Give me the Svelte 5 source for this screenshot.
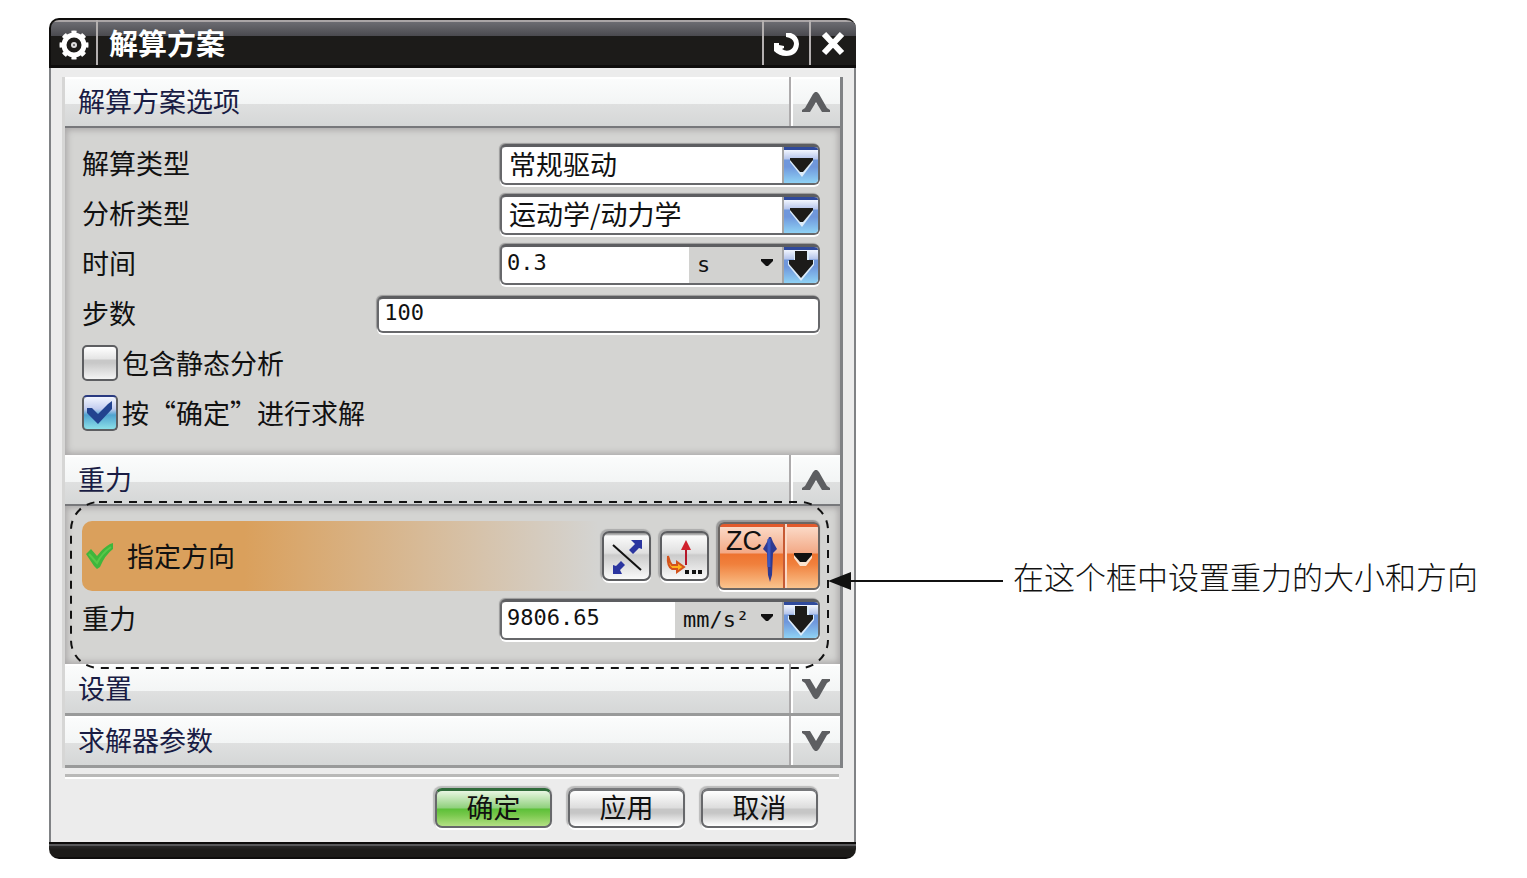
<script lang="ts">
	let open = $state({ options: true, gravity: true, settings: false, solver: false });
	let solutionType = $state('常规驱动');
	let analysisType = $state('运动学/动力学');
	let time = $state('0.3');
	let steps = $state('100');
	let gravity = $state('9806.65');
	let includeStatic = $state(false);
	let solveOnOk = $state(true);
</script>

{#snippet chevron(up: boolean)}
	<svg width="28" height="20" viewBox="0 0 28 20" aria-hidden="true">
		{#if up}
			<path d="M0 20 V18 L3 16 L11 2 L13 0 H15 L17 2 L25 16 L28 18 V20 H20 L14 10 L8 20 Z" fill="#5d5e61" />
		{:else}
			<path d="M0 0 V2 L3 4 L11 18 L13 20 H15 L17 18 L25 4 L28 2 V0 H20 L14 10 L8 0 Z" fill="#5d5e61" />
		{/if}
	</svg>
{/snippet}

{#snippet head(key: 'options' | 'gravity' | 'settings' | 'solver', title: string)}
	<div class="head" class:closed={!open[key]}>
		<h2>{title}</h2>
		<button type="button" aria-label={title} aria-expanded={open[key]} onclick={() => (open[key] = !open[key])}>
			{@render chevron(open[key])}
		</button>
	</div>
{/snippet}

{#snippet dropIcon()}
	<svg class="drop" width="34" height="36" viewBox="0 0 34 36" aria-hidden="true">
		<path d="M6 12 H29 V15 L18 30 L6 15 Z" fill="#dcecfa" />
		<path d="M6 11 H29 V13 L19 25 H16 L6 13 Z" fill="#1c1b19" />
	</svg>
{/snippet}

{#snippet arrowButton(label: string)}
	<button type="button" class="drop" aria-label={label}>
		<svg width="34" height="36" viewBox="0 0 34 36" aria-hidden="true">
			<path d="M10 5 H25 V13 H30 V18 L17 34 L4 18 V14 H10 Z" fill="#dcecfa" />
			<path d="M11 4 H23 V13 H29 V17 L17 31 L5 17 V13 H11 Z" fill="#1c1b19" />
		</svg>
	</button>
{/snippet}

{#snippet caret()}
	<svg class="caret" width="12" height="8" viewBox="0 0 12 8" aria-hidden="true">
		<path d="M0 0 H12 V2 L7 7 H5 L0 2 Z" fill="#111" />
	</svg>
{/snippet}

<main>
	<form class="dialog" onsubmit={(e) => e.preventDefault()}>
		<div class="titlebar">
			<span class="gear">
				<svg width="32" height="32" viewBox="0 0 32 32" aria-hidden="true">
					<circle cx="16" cy="16" r="10" fill="none" stroke="#fff" stroke-width="5" />
					<circle cx="16" cy="16" r="13" fill="none" stroke="#fff" stroke-width="3" pathLength="80" stroke-dasharray="5 5" stroke-dashoffset="2.5" />
					<circle cx="16" cy="16" r="3" fill="#ddd" />
					<circle cx="16" cy="16" r="1" fill="#555" />
				</svg>
			</span>
			<h1>解算方案</h1>
			<button type="button" aria-label="重置">
				<svg width="28" height="28" viewBox="0 0 28 28" aria-hidden="true">
					<path d="M13 3 H18 Q26 6 26 14 Q25 26 13 26 Q6 26 1 21 V13 H6 V15 L11 16 V18 L9 19 Q13 22 17 20 Q21 18 21 13 Q20 8 13 7 Z" fill="#fff" />
				</svg>
			</button>
			<button type="button" aria-label="关闭">
				<svg width="28" height="28" viewBox="0 0 28 28" aria-hidden="true">
					<path d="M4 4 L22 23 M22 4 L4 23" stroke="#fff" stroke-width="6" />
				</svg>
			</button>
		</div>

		<div class="body">
			<div class="groups">
				{@render head('options', '解算方案选项')}
				{#if open.options}
					<div class="panel">
						<div class="row">
							<label for="solution">解算类型</label>
							<div class="field">
								<select id="solution" bind:value={solutionType}>
									<option>常规驱动</option>
								</select>
								{@render dropIcon()}
							</div>
						</div>
						<div class="row">
							<label for="analysis">分析类型</label>
							<div class="field">
								<select id="analysis" bind:value={analysisType}>
									<option>运动学/动力学</option>
								</select>
								{@render dropIcon()}
							</div>
						</div>
						<div class="row">
							<label for="time">时间</label>
							<div class="field">
								<input id="time" type="text" bind:value={time} />
								<span class="unit">
									<select aria-label="时间单位"><option>s</option></select>
									{@render caret()}
								</span>
								{@render arrowButton('时间选项')}
							</div>
						</div>
						<div class="row">
							<label for="steps">步数</label>
							<div class="field long">
								<input id="steps" type="text" bind:value={steps} />
							</div>
						</div>
						<label class="row check">
							<input type="checkbox" bind:checked={includeStatic} />
							<span class="box"></span>
							包含静态分析
						</label>
						<label class="row check">
							<input type="checkbox" bind:checked={solveOnOk} />
							<span class="box">
								<svg width="32" height="32" viewBox="0 0 32 32" aria-hidden="true">
									<path d="M3 11 H8 L14 17 L24 7 L28 4 V12 L14 27 L3 16 Z" fill="#22438f" />
								</svg>
							</span>
							按“确定”进行求解
						</label>
					</div>
				{/if}

				{@render head('gravity', '重力')}
				{#if open.gravity}
					<div class="panel gravity">
						<div class="direction">
							<svg class="tick" width="28" height="28" viewBox="0 0 28 28" aria-hidden="true">
								<path d="M0 12 L5 7 L11 14 Q18 5 24 2 L27 1 V7 Q19 13 14 25 L11 27 L8 24 Z" fill="#3fb63c" />
								<path d="M3 12 L11 21 Q16 11 25 5" fill="none" stroke="#58c848" stroke-width="2" />
							</svg>
							<span class="name">指定方向</span>
							<button type="button" class="tool" aria-label="反向">
								<svg width="40" height="42" viewBox="0 0 40 42" aria-hidden="true">
									<path d="M8 11 L36 36" stroke="#111" stroke-width="2" />
									<path d="M26 6 H37 V15 L34 14 L28 20 L24 16 L30 10 Z" fill="#2b35a0" />
									<path d="M8 31 L11 32 L16 27 L20 31 L15 36 L17 40 H8 Z" fill="#2b35a0" />
								</svg>
							</button>
							<button type="button" class="tool" aria-label="矢量对话框">
								<svg width="40" height="42" viewBox="0 0 40 42" aria-hidden="true">
									<path d="M23 10 V31" stroke="#b5182a" stroke-width="2" />
									<path d="M23 6 L28 16 H18 Z" fill="#d0202c" />
									<path d="M5 22 L7 28 L9 31 H14 V28 L21 33 L14 38 V35 H9 Q4 32 5 22 Z" fill="#ffb21c" stroke="#d4531c" stroke-width="2" />
									<path d="M22 36 H26 V40 H22 Z M29 36 H33 V40 H29 Z M35 36 H39 V40 H35 Z" fill="#111" />
								</svg>
							</button>
							<div class="vector">
								<button type="button" class="axis">
									<span>ZC</span>
									<svg width="16" height="46" viewBox="0 0 16 46" aria-hidden="true">
										<path d="M7 0 H9 L11 5 L15 12 L11 16 L10 38 L8 45 L6 38 L5 16 L1 12 L5 5 Z" fill="#2f3a92" />
										<path d="M7 2 V30" stroke="#3b57c0" stroke-width="3" />
									</svg>
								</button>
								<button type="button" class="more" aria-label="更多矢量">
									<svg width="22" height="16" viewBox="0 0 22 16" aria-hidden="true">
										<path d="M2 3 H20 V6 L14 14 H8 L2 6 Z" fill="#fbe3cf" />
										<path d="M2 1 H20 V3 L14 10 H8 L2 3 Z" fill="#111" />
									</svg>
								</button>
							</div>
						</div>
						<div class="row">
							<label for="gravity">重力</label>
							<div class="field">
								<input id="gravity" type="text" bind:value={gravity} />
								<span class="unit wide">
									<select aria-label="重力单位"><option>mm/s²</option></select>
									{@render caret()}
								</span>
								{@render arrowButton('重力选项')}
							</div>
						</div>
						<svg class="outline" aria-hidden="true">
							<rect x="1" y="1" rx="28" />
						</svg>
					</div>
				{/if}

				{@render head('settings', '设置')}
				{@render head('solver', '求解器参数')}
			</div>

			<div class="actions">
				<button class="ok">确定</button>
				<button type="button">应用</button>
				<button type="button">取消</button>
			</div>
		</div>
		<div class="bottom"></div>
	</form>

	<p class="callout">
		<svg width="175" height="18" viewBox="0 0 175 18" aria-hidden="true">
			<path d="M20 9 H175" stroke="#111" stroke-width="2" />
			<path d="M0 9 L23 0 V18 Z" fill="#111" />
		</svg>
		<span>在这个框中设置重力的大小和方向</span>
	</p>
</main>

<style>
	:global(body) {
		background: #fff;
	}
	:global(#app) {
		overflow-x: hidden;
	}
	main {
		display: flex;
		align-items: flex-start;
		padding: 18px 49px 20px;
		color: #111;
		font: 27px/40px 'Noto Sans CJK SC', sans-serif;
	}
	main * {
		box-sizing: border-box;
	}
	h1,
	h2,
	p {
		margin: 0;
		font-size: 27px;
		font-weight: 400;
	}
	button,
	input,
	select {
		margin: 0;
		padding: 0;
		border: 0;
		background: none;
		color: inherit;
		font: inherit;
	}
	svg {
		display: block;
		flex: none;
	}

	.dialog {
		flex: 1;
		min-width: 0;
	}
	.titlebar {
		display: flex;
		height: 50px;
		border: 2px solid #0e0d0c;
		border-right-width: 0;
		border-bottom-width: 3px;
		border-radius: 10px 10px 0 0;
		background: linear-gradient(#aaa5a6 2px, #6c6c72 2px, #4a4a4f 16px, #1c1b19 16px);
		color: #fff;
	}
	.gear {
		display: flex;
		align-items: center;
		justify-content: center;
		width: 47px;
		padding-top: 4px;
		border-right: 2px solid #b4b0b0;
	}
	.titlebar h1 {
		flex: 1;
		padding-left: 11px;
		font-size: 29px;
		font-weight: 700;
		line-height: 44px;
	}
	.titlebar button {
		display: flex;
		align-items: center;
		justify-content: center;
		width: 47px;
		padding-top: 2px;
		border-left: 2px solid #b4b0b0;
	}
	.body {
		padding: 9px 11px 14px;
		border: solid #808285;
		border-width: 0 2px;
		background: #ececec;
	}
	.groups {
		border-left: 3px solid #d6d6d5;
		border-right: 3px solid #808285;
	}
	.bottom {
		height: 17px;
		border-radius: 0 0 10px 10px;
		background: linear-gradient(#0e0d0c 2px, #58585a 2px, #58585a 4px, #2a2a2a 4px, #1c1b19 8px, #1c1b19 15px, #0e0d0c 15px);
	}

	.head {
		display: flex;
		height: 51px;
		border-bottom: 2px solid #77787b;
		background: linear-gradient(#fff 2px, #fbfcfc 2px, #f3f5f5 27px, #dfe0e0 27px, #d5d7d7);
		color: #191c44;
	}
	.head.closed {
		height: 52px;
		border-bottom: 3px solid #999a9a;
	}
	.head h2 {
		flex: 1;
		padding: 4px 13px;
	}
	.head button {
		display: flex;
		align-items: center;
		justify-content: center;
		width: 51px;
		border-left: 2px solid #adabac;
		box-shadow: inset 2px 0 #fff;
	}

	.panel {
		position: relative;
		padding: 11px 20px 16px 17px;
		background: #d4d4d2;
		box-shadow: inset 0 0 6px 2px #a9a7a7;
	}
	.row {
		display: flex;
		align-items: center;
		justify-content: space-between;
		height: 50px;
	}
	.row label,
	.check {
		padding-bottom: 2px;
	}
	.field {
		display: flex;
		width: 320px;
		height: 41px;
		overflow: hidden;
		border: 2px solid #67686b;
		border-top: 3px solid #5d5e61;
		border-radius: 6px;
		background: #fff;
		box-shadow: 0 2px #fff, -1px -1px 1px #999;
	}
	.field.long {
		width: 60%;
		height: 37px;
	}
	.field > select {
		flex: 1;
		min-width: 0;
		margin-right: -36px;
		padding: 0 44px 2px 7px;
		appearance: none;
		line-height: 34px;
	}
	.field input {
		flex: 1;
		min-width: 0;
		padding: 0 5px 4px;
		font: 22px/30px 'DejaVu Sans Mono', monospace;
	}
	.drop {
		width: 36px;
		flex: none;
		border-left: 2px solid #a5a5a5;
		background: linear-gradient(#2f4a9c 3px, #f2f6ff 3px, #b5c5ec 12px, #6f97dc 13px, #6f97dc 20px, #8fd2f4);
		pointer-events: none;
	}
	button.drop {
		pointer-events: auto;
	}
	.unit {
		display: grid;
		align-items: center;
		width: 93px;
		background: #d2d2d0;
	}
	.unit.wide {
		width: 107px;
	}
	.unit select,
	.unit .caret {
		grid-area: 1 / 1;
	}
	.unit select {
		height: 100%;
		padding-left: 8px;
		appearance: none;
		font: 22px/34px 'DejaVu Sans Mono', monospace;
	}
	.caret {
		justify-self: end;
		margin: 0 9px 4px 0;
		pointer-events: none;
	}

	.check {
		position: relative;
		justify-content: flex-start;
		gap: 4px;
	}
	.check input {
		position: absolute;
		opacity: 0;
	}
	.box {
		width: 36px;
		height: 36px;
		border: 2px solid #5d5e61;
		border-radius: 5px;
		background: linear-gradient(#fff, #e4e4e4 12px, #c8c8c8 13px, #c8c8c8 16px, #f4f4f4);
	}
	.box svg {
		visibility: hidden;
	}
	.check input:checked + .box {
		border-top-color: #2a3a80;
		background: linear-gradient(#f2f6ff, #c3cdef 12px, #4fa3d0 18px, #8ce0e8);
	}
	.check input:checked + .box svg {
		visibility: visible;
	}

	.gravity {
		padding: 15px 20px 20px 17px;
	}
	.direction {
		display: flex;
		align-items: center;
		height: 70px;
		margin-bottom: 3px;
		border-radius: 10px;
		background: linear-gradient(90deg, #daa05c 22%, #d4d4d2 70%);
	}
	.tick {
		margin-left: 4px;
	}
	.name {
		flex: 1;
		padding-left: 13px;
	}
	.tool {
		width: 49px;
		height: 50px;
		margin-right: 9px;
		padding: 0 2px 3px;
		border: 2px solid #5d5e61;
		border-radius: 7px;
		background: linear-gradient(#999 1px, #fafafa 3px, #e0e0e0 20px, #cbcbcb 22px, #fafafa);
		box-shadow: 0 2px #fff, -1px -1px 1px 1px #aaa;
	}
	.tool svg {
		margin-left: -1px;
	}
	.vector {
		display: flex;
		width: 102px;
		height: 68px;
		border: 2px solid #6b6664;
		border-radius: 6px;
		background: linear-gradient(#e25a2c 3px, #fbd9c6 3px, #f3a986 29px, #ee7330 30px, #f0803c 40px, #fac48e);
		box-shadow: 0 2px #fff, -1px -1px 1px 1px #999;
	}
	.axis {
		display: flex;
		flex: 1;
		align-items: flex-end;
		padding: 0 0 5px 6px;
		border-right: 2px solid #c65a34;
		font: 27px/34px 'Liberation Sans', sans-serif;
	}
	.axis span {
		align-self: flex-start;
	}
	.more {
		display: flex;
		align-items: center;
		justify-content: center;
		width: 33px;
		padding-top: 8px;
		border-left: 2px solid #fbd9c6;
	}
	.outline {
		position: absolute;
		inset: -5px 11px -5px 5px;
		width: calc(100% - 16px);
		height: calc(100% + 10px);
		z-index: 1;
		pointer-events: none;
	}
	.outline rect {
		width: calc(100% - 2px);
		height: calc(100% - 2px);
		fill: none;
		stroke: #111;
		stroke-width: 2;
		stroke-dasharray: 8 7;
	}

	.actions {
		display: flex;
		justify-content: flex-end;
		gap: 16px;
		margin: 6px 4px 0 3px;
		padding: 11px 21px 0 0;
		border-top: 3px solid #b9b9b8;
		box-shadow: inset 0 2px #fff;
	}
	.actions button {
		width: 117px;
		height: 40px;
		padding-bottom: 3px;
		border: 2px solid #67686b;
		border-top: 3px solid #77787b;
		border-radius: 7px;
		background: linear-gradient(#fff, #dcdcdc 17px, #c6c6c6 18px, #c6c6c6 22px, #fff);
		box-shadow: 0 2px #fff, -1px -1px 1px 1px #bbb;
		line-height: 32px;
	}
	.actions .ok {
		border-top-color: #2f6b3a;
		background: linear-gradient(#e8f6e2, #8fd07c 17px, #5cc038 18px, #78c84c 24px, #b4e084);
	}

	.callout {
		display: flex;
		align-items: center;
		gap: 10px;
		margin: 538px 0 0 -28px;
		z-index: 2;
	}
	.callout span {
		padding-bottom: 10px;
		font-size: 31px;
		font-weight: 300;
		white-space: nowrap;
	}
</style>
